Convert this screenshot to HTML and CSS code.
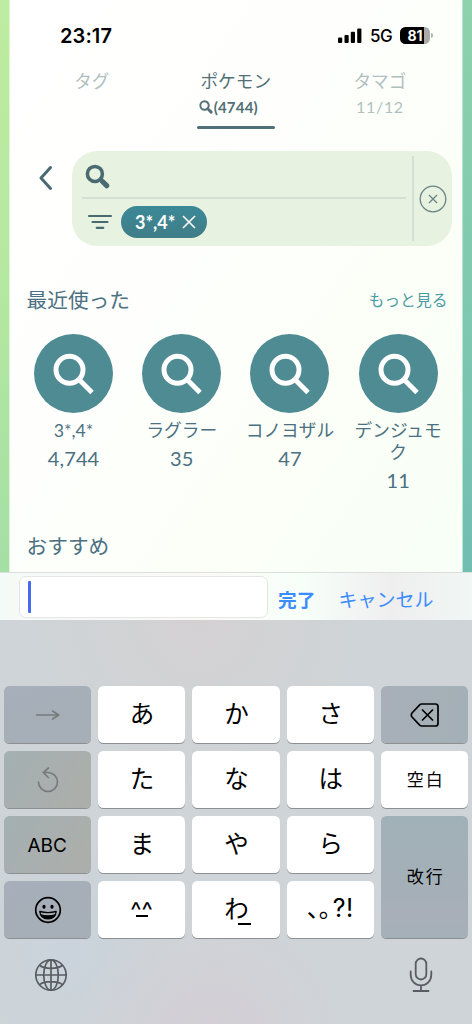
FILE: index.html
```html
<!DOCTYPE html>
<html lang="ja">
<head>
<meta charset="utf-8">
<title>ポケモン検索</title>
<link rel="stylesheet" href="styles.css">
</head>
<body>
<svg class="defs" width="0" height="0">
  <symbol id="search" viewBox="0 0 79 79">
    <circle cx="35.5" cy="35.8" r="13.5" fill="none" stroke="#fff" stroke-width="5"/>
    <path d="M45 45.500 58 58.500" fill="none" stroke="#fff" stroke-width="5"/>
  </symbol>
  <symbol id="glass" viewBox="0 0 24 24">
    <circle cx="9.5" cy="9.5" r="7.2" fill="none" stroke="currentColor" stroke-width="3.4"/>
    <path d="M15 15l1.5 1.5" stroke="currentColor" stroke-width="3"/>
    <path d="M16.8 16.8l4 4" stroke="currentColor" stroke-width="5" stroke-linecap="round"/>
  </symbol>
</svg>
<main class="app">
  <div class="sheet">
    <header class="status">
      <span class="time">23:17</span>
      <div class="signals">
        <svg width="24" height="16" viewBox="0 0 24 16"><rect x="0" y="9.5" width="4.2" height="5.5" rx="1"/><rect x="6.5" y="7" width="4.2" height="8" rx="1"/><rect x="12.8" y="3.8" width="4.2" height="11.2" rx="1"/><rect x="19.2" y="0.5" width="4.2" height="14.5" rx="1"/></svg>
        <span class="network">5G</span>
        <span class="battery">81</span><span class="nub"></span>
      </div>
    </header>
    <nav class="tabs">
      <div class="tab"><span>タグ</span></div>
      <div class="tab active"><span>ポケモン</span><small><svg width="14" height="14"><use href="#glass"/></svg>(4744)</small></div>
      <div class="tab"><span>タマゴ</span><small class="eggs">11/12</small></div>
    </nav>
    <section class="search">
      <svg class="back" width="16" height="26" viewBox="0 0 16 26"><path d="M12.500 2.500 3 13l9.500 10.500" fill="none" stroke="currentColor" stroke-width="3" stroke-linecap="round" stroke-linejoin="round"/></svg>
      <div class="searchbox">
        <div class="fields">
          <div class="query"><svg width="25" height="25"><use href="#glass"/></svg></div>
          <div class="filters">
            <svg width="26" height="18" viewBox="0 0 26 18"><path d="M2 3h22M5.500 9h15M9.700 14.800h6.600" stroke="currentColor" stroke-width="2.200" stroke-linecap="round"/></svg>
            <span class="chip">3*,4*<svg width="14" height="14" viewBox="0 0 14 14"><path d="M1 1l12 12M13 1 1 13" stroke="currentColor" stroke-width="1.600"/></svg></span>
          </div>
        </div>
        <div class="clear"><svg width="28" height="28" viewBox="0 0 28 28"><path d="M10 10l8 8M18 10l-8 8" stroke="currentColor" stroke-width="1.300"/><circle cx="14" cy="14" r="12.800" fill="none" stroke="currentColor" stroke-width="1.300"/></svg></div>
      </div>
    </section>
    <section class="results">
      <div class="heading"><h2>最近使った</h2><a>もっと見る</a></div>
      <div class="recent">
        <div class="item"><svg class="disc"><use href="#search"/></svg><span>3*,4*</span><b>4,744</b></div>
        <div class="item"><svg class="disc"><use href="#search"/></svg><span>ラグラー</span><b>35</b></div>
        <div class="item"><svg class="disc"><use href="#search"/></svg><span>コノヨザル</span><b>47</b></div>
        <div class="item"><svg class="disc"><use href="#search"/></svg><span>デンジュモク</span><b>11</b></div>
      </div>
      <h2 class="suggested">おすすめ</h2>
    </section>
  </div>
</main>
<div class="accessory">
  <div class="input"><i></i></div>
  <span class="done">完了</span>
  <span class="cancel">キャンセル</span>
</div>
<div class="keyboard">
  <div class="keys">
    <div class="key dark dim cool"><svg width="26" height="16" viewBox="0 0 26 16"><path d="M1.500 8h22M17.500 4l6.200 4-6.200 4" fill="none" stroke="currentColor" stroke-width="1.600" stroke-linecap="round" stroke-linejoin="round"/></svg></div>
    <div class="key">あ</div><div class="key">か</div><div class="key">さ</div>
    <div class="key dark"><svg width="30" height="26" viewBox="0 0 30 26"><path d="M11.500 2H25.500Q28 2 28 4.500V21.500Q28 24 25.500 24H11.500Q10.500 24 9.700 23.200L2 15Q.6 13 2 11L9.700 2.800Q10.500 2 11.500 2Z M12.500 8l10 10M22.500 8l-10 10" fill="none" stroke="currentColor" stroke-width="1.700" stroke-linejoin="round" stroke-linecap="round"/></svg></div>
    <div class="key dark dim warm"><svg width="24" height="28" viewBox="0 0 24 28"><path d="M2.500 16a9.500 9.500 0 1 0 9.500-9.500H7.500M12.500 2 7.300 6.500l5 5" fill="none" stroke="currentColor" stroke-width="1.700" stroke-linecap="round" stroke-linejoin="round"/></svg></div>
    <div class="key">た</div><div class="key">な</div><div class="key">は</div>
    <div class="key word">空白</div>
    <div class="key dark warm abc">ABC</div>
    <div class="key">ま</div><div class="key">や</div><div class="key">ら</div>
    <div class="key dark word return">改行</div>
    <div class="key dark cool"><svg width="28" height="28" viewBox="0 0 28 28"><circle cx="14" cy="14" r="12.300" fill="none" stroke="#000" stroke-width="1.700"/><ellipse cx="10" cy="10.800" rx="1.600" ry="2"/><ellipse cx="18" cy="10.800" rx="1.600" ry="2"/><path d="M5.800 15.500q8.200 2.200 16.400 0-.6 7.300-8.200 7.300t-8.200-7.300Z" fill="none" stroke="#000" stroke-width="1.300" stroke-linejoin="round"/><path d="M6.700 18.300q7.300 2 14.600 0-1.400 4.500-7.300 4.500t-7.300-4.500Z"/></svg></div>
    <div class="key face"><span>^^</span><i></i></div>
    <div class="key wa">わ<i></i></div>
    <div class="key punct"><span class="marks">、。</span><span>?!</span></div>
  </div>
  <div class="dock">
    <svg width="34" height="34" viewBox="0 0 34 34" fill="none" stroke="currentColor" stroke-width="1.700"><circle cx="17" cy="17" r="15.200"/><ellipse cx="17" cy="17" rx="7.300" ry="15.200"/><path d="M17 1.800v30.400M1.800 17h30.400M5.500 7.300Q9.500 10.300 17 10.300T28.500 7.300M5.500 26.700Q9.500 23.700 17 23.700T28.500 26.700"/></svg>
    <svg width="24" height="36" viewBox="0 0 24 36" fill="none" stroke="currentColor" stroke-width="1.800" stroke-linecap="round"><rect x="6.700" y="1.500" width="10.600" height="21" rx="5.300"/><path d="M1.700 14.500v3.500a10.300 10.300 0 0 0 20.600 0v-3.500M12 28.500v5.500M4.500 34h15"/></svg>
  </div>
</div>
</body>
</html>
```

FILE: styles.css
```css
* { box-sizing: border-box; }
body {
  margin: 0;
  width: 472px;
  height: 1024px;
  overflow: hidden;
  font-family: Lato, "Noto Sans CJK JP", sans-serif;
  color: #4a6a72;
}
svg { display: block; flex: none; }
.defs { position: absolute; }
.app {
  height: 572px;
  padding: 0 9px;
  background: linear-gradient(#8ed2ac, #80c9b0 50%, #71bdb2) right / 50% 100% no-repeat, linear-gradient(#beeca0, #b5e8a1 50%, #a4dfa6);
}
.sheet {
  height: 100%;
  border-left: 1px solid #dff5d5;
  border-right: 1px solid #b9e6d4;
  background: linear-gradient(125deg, #fff 0%, #fefffd 40%, #fcfff8 65%, #f7fff6 100%);
}
.status {
  display: flex;
  justify-content: space-between;
  align-items: center;
  height: 71px;
  padding: 0 30px 0 50px;
  color: #000;
  font-family: Inter, sans-serif;
}
.time { font-size: 20px; font-weight: 600; letter-spacing: .1px; }
.signals { display: flex; align-items: center; margin-right: -1px; }
.network { margin: 0 8px 0 8px; font-size: 17px; font-weight: 500; letter-spacing: -.6px; }
.battery {
  width: 30px;
  height: 17px;
  border-radius: 5.500px;
  background: linear-gradient(90deg, #000 81%, #a9aba9 81%);
  color: #fff;
  font-size: 14px;
  font-weight: 700;
  line-height: 17px;
  text-align: center;
}
.nub { width: 2px; height: 5px; margin-left: 1px; border-radius: 0 2px 2px 0; background: #b4b6b4; }
.tabs { display: flex; height: 80px; padding: 0 10px; }
.tab {
  display: flex;
  flex-direction: column;
  align-items: center;
  width: 144.500px;
  height: 58px;
  color: #b0bfc0;
  font-size: 17.700px;
  line-height: 22px;
}
.tab:first-child { width: 144px; }
.active { color: #527076; }
.active::after { content: ""; width: 78px; height: 2.500px; margin-top: 8px; border-radius: 2px; background: #4f7076; }
.tab small { display: flex; align-items: center; height: 22px; margin-top: 3px; font-size: 15px; font-weight: 700; }
.active small { gap: 1px; padding-right: 15px; letter-spacing: .2px; }
.tab .eggs { font-size: 16px; font-weight: 400; letter-spacing: .7px; }
.search { display: flex; height: 125px; padding: 0 10px 30px 27px; }
.back { width: 16px; margin: 14px 18px 0 1px; }
.searchbox { display: flex; flex: 1; padding: 5px 5px 5px 10px; border-radius: 25px; background: #e8f2e1; }
.fields { flex: 1; padding-right: 6px; }
.query { height: 43px; padding: 8px 3px; border-bottom: 2.500px solid #d5dfd4; }
.filters { display: flex; align-items: center; height: 45px; padding-left: 5px; }
.chip {
  display: flex;
  align-items: center;
  gap: 7px;
  height: 32px;
  margin-left: 8px;
  padding: 0 10.500px 0 14px;
  border-radius: 16px;
  background: linear-gradient(#3b8998, #407d87);
  color: #fff;
  font-size: 18px;
  font-weight: 700;
}
.clear { display: flex; align-items: center; padding-left: 5px; border-left: 2px solid #d5dfd4; color: #6b8482; }
.results { padding: 10px 8.500px 0 9.500px; color: #4b7081; }
.heading { display: flex; justify-content: space-between; padding: 0 6px 0 7px; }
h2 { margin: 0; font-size: 20.700px; font-weight: 400; line-height: 28px; }
.heading a { color: #4c9aa4; font-size: 15.800px; line-height: 27px; }
.recent { display: grid; grid-template-columns: repeat(4, 108.200px); margin-top: 20px; }
.item { display: flex; flex-direction: column; align-items: center; padding: 0 8px; text-align: center; }
.disc { width: 79px; height: 79px; border-radius: 50%; background: #4e8b93; }
.item span { margin-top: 7px; font-size: 17.700px; line-height: 21.500px; }
.item b { margin-top: 4.500px; font-size: 20px; font-weight: 400; line-height: 24px; letter-spacing: .1px; }
.suggested { margin: 40.500px 7px 0; }
.accessory {
  display: flex;
  align-items: center;
  height: 48px;
  padding: 0 0 0 19px;
  border-top: 1px solid #dcdfdc;
  background: linear-gradient(90deg, #f4faf7, #fbfaf7 42%, #f7fff9 64%, #efeeef 83%, #f0f7f4);
  color: #3b8cff;
  font-family: "Noto Sans CJK JP", sans-serif;
  font-size: 18.700px;
}
.input { width: 249px; height: 42px; padding: 4px 8px; border: 1px solid #e5e6e5; border-radius: 7px; background: #fff; }
.input i { display: block; width: 3px; height: 32px; border-radius: 1px; background: #4669ed; }
.done { margin-left: 10px; padding-top: 3px; font-weight: 600; }
.cancel { margin-left: 23px; padding-top: 3px; font-size: 19px; }
.keyboard {
  height: 404px;
  padding: 66px 3.500px 0 3.500px;
  background:
    radial-gradient(circle at 45% 105%, #d4ced5, transparent 28%),
    radial-gradient(circle at 14% 82%, #cad3dc, transparent 22%),
    radial-gradient(circle at 42% 0%, #d4d1d3, transparent 35%),
    #ced4d7;
}
.keys { display: grid; grid-template-columns: repeat(5, 87.300px); grid-auto-rows: 57px; column-gap: 7.100px; row-gap: 8px; }
.key {
  display: flex;
  align-items: center;
  justify-content: center;
  padding: 0 0 2px 1px;
  border-radius: 5.500px;
  background: #fff;
  box-shadow: 0 1px 0 #8c9092;
  color: #000;
  font-family: "Noto Sans CJK JP", sans-serif;
  font-size: 24.500px;
  line-height: 1;
}
.dark { padding-bottom: 0; background: linear-gradient(100deg, #a8afb8, #a3b0b6); }
.cool { background: linear-gradient(160deg, #a6afba, #a6afb6); }
.warm { background: linear-gradient(120deg, #a4b0b2, #adaeaa); }
.dim { color: #777b7d; }
.abc { padding: 1px 0 0; font-family: Inter, sans-serif; font-size: 19px; }
.word { padding: 0 0 3px 2px; font-size: 17px; letter-spacing: 2px; }
.return { grid-row: 3 / 5; grid-column: 5; background: linear-gradient(#a1b1b8, #a5afb8 65%, #a9afb8 80%, #a4b0b7); }
.face { flex-direction: column; justify-content: flex-start; padding: 18px 0 0; font-family: Inter, sans-serif; font-size: 24px; }
.face span { height: 16px; }
.face i { width: 12px; height: 1.700px; background: #000; }
.wa { position: relative; }
.wa i { position: absolute; left: 46px; top: 42px; width: 13px; height: 1.500px; background: #000; }
.punct { justify-content: flex-start; padding-left: 20px; font-family: Inter, "Noto Sans CJK JP", sans-serif; font-size: 25px; }
.punct span { letter-spacing: .5px; }
.punct .marks { width: 26px; font-size: 24px; letter-spacing: 0; white-space: nowrap; }
.dock { display: flex; justify-content: space-between; align-items: center; padding: 19px 36px 0 30.500px; color: #595d63; }
```
